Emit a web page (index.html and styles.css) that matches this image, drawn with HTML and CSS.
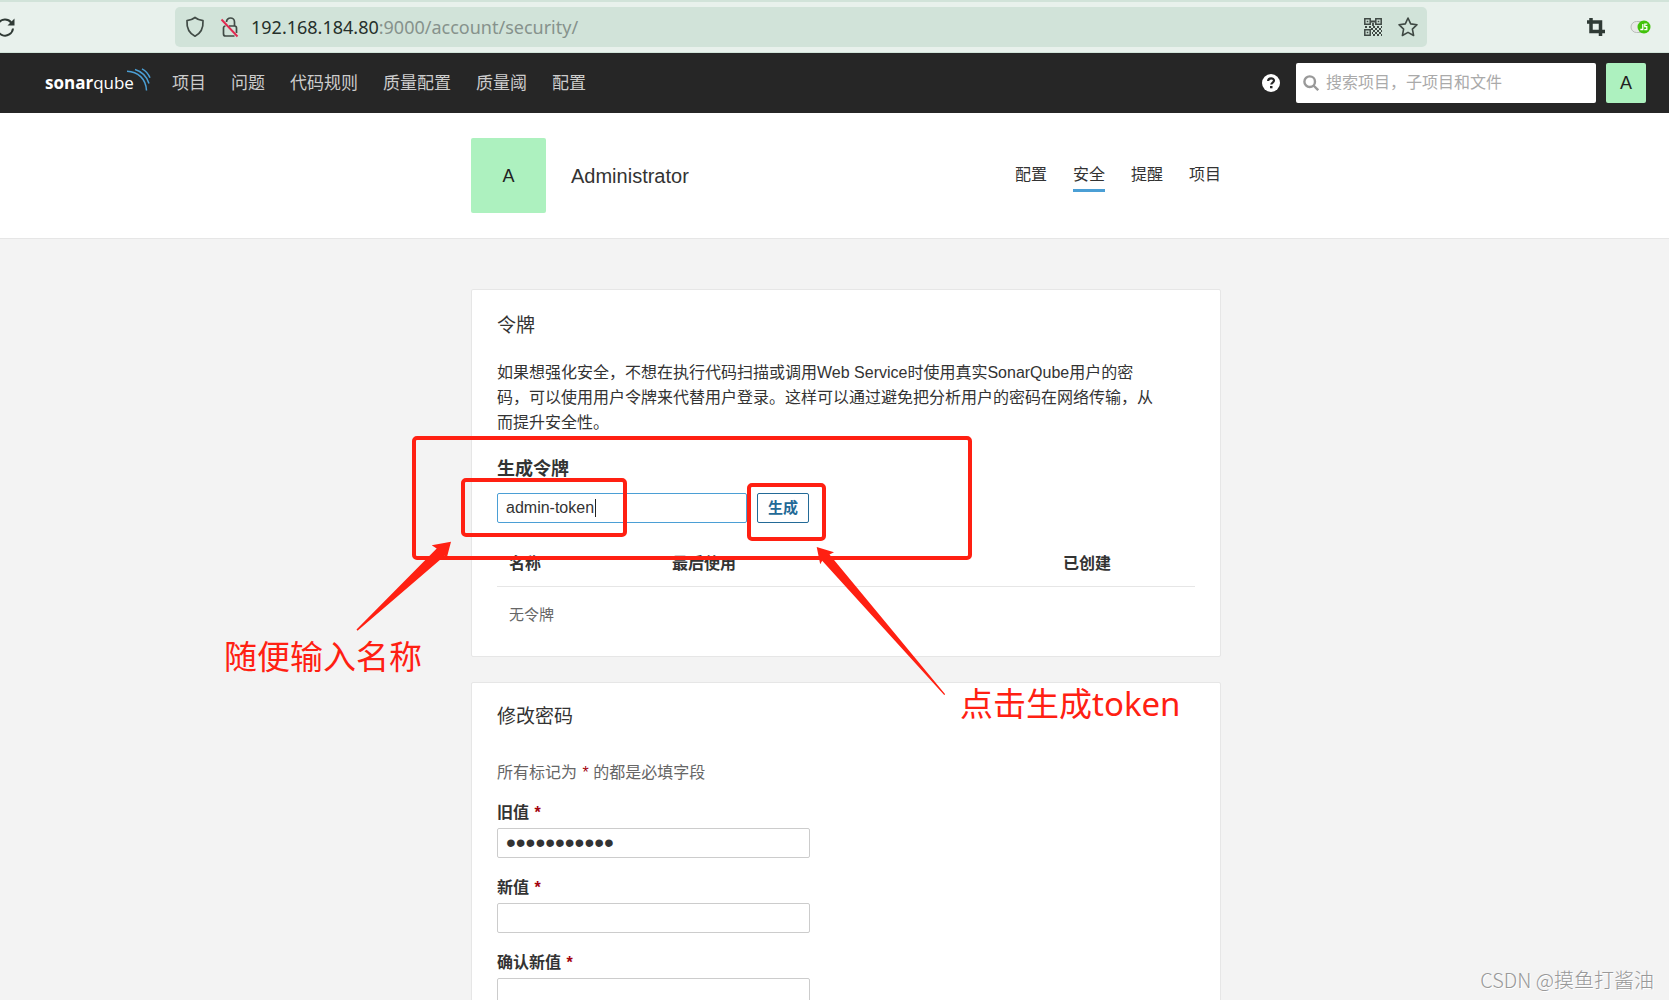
FILE: index.html
```html
<!DOCTYPE html>
<html lang="zh-CN">
<head>
<meta charset="utf-8">
<title>安全 - SonarQube</title>
<link rel="stylesheet" href="styles.css">
</head>
<body>
<div class="browser">
  <button class="icon-button reload" aria-label="刷新">
    <svg width="20" height="22" viewBox="0 0 20 22" fill="none" stroke="#2f3a35" stroke-width="2"><path d="M16.200 6.500A8 8 0 1 0 18 12.500"/><path d="M19.500 2.500v7h-7z" fill="#2f3a35" stroke="none"/></svg>
  </button>
  <div class="address">
    <svg width="20" height="22" viewBox="0 0 20 22" fill="none" stroke="#414b46" stroke-width="1.700" stroke-linejoin="round"><path d="M10 1.500c2.500 2 5 2.800 8 3.200.4 6.500-1.800 12.300-8 15.500C3.800 17 1.600 11.200 2 4.700c3-.4 5.500-1.200 8-3.200z"/></svg>
    <svg class="lock" width="20" height="22" viewBox="0 0 20 22" fill="none" stroke="#414b46" stroke-width="1.700"><path d="M6.500 6a4 4 0 0 1 8 0v4"/><path d="M9 10h5.500a2 2 0 0 1 2 2v5M14.500 20h-9a2 2 0 0 1-2-2v-6a2 2 0 0 1 2-2"/><path d="M1.500 3.500l16 17" stroke="#e22850" stroke-width="1.900"/></svg>
    <span class="url"><span class="host">192.168.184.80</span>:9000/account/security/</span>
    <svg width="20" height="20" viewBox="0 0 20 20" fill="none" stroke="#3f4944" stroke-width="1.500"><path d="M1.800 1.800h5.400v5.400H1.800zM12.800 1.800h5.400v5.400h-5.400zM1.800 12.800h5.400v5.400H1.800z"/><path d="M3.700 4.500h1.600M14.700 4.500h1.600M3.700 15.500h1.600" stroke-width="1.700"/><path d="M8 4.500h4M10 6v3M2 10h2m2 0h2m2 0h2m2 0h2m2 0h1M8 12h2m2 0h2m2 0h2M10 14h2m2 0h2m2 0h1M9 16h1m2 0h2m2 0h2M10 18h2m2 0h2m2 0h1" stroke-width="1.800"/></svg>
    <svg class="star" width="22" height="22" viewBox="0 0 22 22" fill="none" stroke="#3f4944" stroke-width="1.600" stroke-linejoin="round"><path d="M11 2l2.700 5.900 6.300.8-4.600 4.400 1.200 6.400L11 16.400l-5.600 3.100 1.200-6.400L2 8.700l6.300-.8z"/></svg>
  </div>
  <div class="extensions">
    <svg width="20" height="20" viewBox="0 0 20 20" fill="none" stroke="#2f3a35" stroke-width="3.500"><path d="M5 1v13.500h14M1 5h13.500v14"/></svg>
    <svg width="21" height="16" viewBox="0 0 21 16"><rect x="1" y="2.500" width="16" height="11" rx="5.500" fill="#e8e8e8" stroke="#b8bdb9"/><circle cx="14" cy="8" r="6.500" fill="#41c30a"/><path d="M12.800 5v5.500h-2.500M17.300 5.200h-2.500v2.500h2v3h-2.500" fill="none" stroke="#fff" stroke-width="1.300"/></svg>
  </div>
</div>
<header class="topbar">
  <a class="logo" href="#"><span><b>sonar</b>qube</span>
    <svg width="26" height="24" viewBox="0 0 26 24" fill="none" stroke="#4b9fd5" stroke-width="1.500"><path d="M1 3.200C12 3.500 20 11 20.500 22.500M9 1.500c7.500 2.300 12 7.500 14 14M16 .8c3.800 2 6.400 5 8 9"/></svg>
  </a>
  <nav class="main-nav">
    <a href="#">项目</a><a href="#">问题</a><a href="#">代码规则</a><a href="#">质量配置</a><a href="#">质量阈</a><a href="#">配置</a>
  </nav>
  <button class="icon-button help" aria-label="帮助">
    <svg width="18" height="18" viewBox="0 0 18 18"><circle cx="9" cy="9" r="9" fill="#fff"/><path d="M6.100 7c.1-3.600 5.900-3.500 5.900-.4 0 2-2.700 1.900-2.700 4" fill="none" stroke="#262626" stroke-width="2.200"/><path d="M8 12h2.500v2.300H8z" fill="#262626"/></svg>
  </button>
  <label class="search">
    <svg width="16" height="16" viewBox="0 0 16 16" fill="none" stroke="#999" stroke-width="2.400"><circle cx="6.700" cy="6.700" r="5.300"/><path d="M10.500 10.500l4.700 4.700"/></svg>
    <input type="search" aria-label="搜索" placeholder="搜索项目，子项目和文件">
  </label>
  <button class="avatar small">A</button>
</header>
<div class="page">
  <div class="account">
    <div class="container account-row">
      <div class="avatar large">A</div>
      <h1>Administrator</h1>
      <nav class="tabs"><a href="#">配置</a><a class="active" href="#">安全</a><a href="#">提醒</a><a href="#">项目</a></nav>
    </div>
  </div>
  <main class="cards">
    <section class="card tokens">
      <h2>令牌</h2>
      <p class="intro">如果想强化安全，不想在执行代码扫描或调用Web Service时使用真实SonarQube用户的密码，可以使用用户令牌来代替用户登录。这样可以通过避免把分析用户的密码在网络传输，从而提升安全性。</p>
      <label class="generate-label" for="token-name">生成令牌</label>
      <form class="generate">
        <div class="token-field"><input id="token-name" type="text" value="admin-token"><span class="caret"></span></div>
        <button type="button">生成</button>
      </form>
      <table>
        <thead><tr><th class="name">名称</th><th>最后使用</th><th class="created">已创建</th><th class="actions"></th></tr></thead>
        <tbody><tr><td colspan="4">无令牌</td></tr></tbody>
      </table>
    </section>
    <section class="card password">
      <h2>修改密码</h2>
      <p class="note">所有标记为 <em>*</em> 的都是必填字段</p>
      <form>
        <div class="field"><label for="old">旧值 <em>*</em></label><input id="old" type="password" value="12345678901"></div>
        <div class="field"><label for="new">新值 <em>*</em></label><input id="new" type="password"></div>
        <div class="field"><label for="confirm">确认新值 <em>*</em></label><input id="confirm" type="password"></div>
      </form>
    </section>
  </main>
</div>
<svg class="annotations" width="1669" height="1000" viewBox="0 0 1669 1000">
  <g fill="none" stroke="#ff2012" stroke-width="4">
    <rect x="414" y="438" width="556" height="120" rx="3"/>
    <rect x="463" y="480" width="162" height="55" rx="3"/>
    <rect x="749" y="485" width="75" height="54" rx="3"/>
  </g>
  <g fill="#ff2012">
    <path d="M451 541.700l-19.300 3.600 5 3.200L356.500 629.500l1 1.200 87.300-75 2 2z"/>
    <path d="M816.700 547l17.300 5.300-4.500 2.200L945.200 694.300l-1 .8-122-134.400-2 3.600z"/>
  </g>
  <g class="annotation-text">
    <text x="224" y="669">随便输入名称</text>
    <text x="960" y="716">点击生成token</text>
  </g>
</svg>
<div class="watermark">CSDN @摸鱼打酱油</div>
</body>
</html>
```
FILE: styles.css
```css
* { box-sizing: border-box; }

body {
  margin: 0;
  height: 100vh;
  display: flex;
  flex-direction: column;
  overflow: hidden;
  position: relative;
  background: #f3f3f3;
  color: #333;
  font: 16px/24px "Liberation Sans", "Noto Sans CJK SC", sans-serif;
}

h1, h2, p { margin: 0; font-weight: 400; }
a { color: inherit; text-decoration: none; }
input, button { font: inherit; color: inherit; }
svg { display: block; flex: none; }
em { margin-left: 1px; color: #a4030f; font-style: normal; }

.icon-button {
  border: 0;
  padding: 0;
  background: none;
  flex: none;
}

/* Browser toolbar */
.browser {
  flex: none;
  height: 53px;
  display: flex;
  align-items: center;
  background: #e8f1ec;
  border-top: 2px solid #d1e3d9;
  border-bottom: 1px solid #d1e3d9;
}
.reload { margin-left: -5px; width: 20px; }
.address {
  flex: 1;
  height: 40px;
  margin-left: 160px;
  padding: 0 8px 0 10px;
  display: flex;
  align-items: center;
  background: #d1e3d9;
  border-radius: 5px;
}
.lock { margin-left: 15px; }
.url {
  flex: 1;
  margin-left: 11px;
  font-family: "Noto Sans", sans-serif;
  font-size: 18px;
  color: #86928c;
}
.host { color: #26302b; }
.star { margin-left: 14px; }
.extensions {
  display: flex;
  align-items: center;
  gap: 24px;
  padding: 0 18px 0 159px;
}

/* Application header */
.topbar {
  flex: none;
  height: 60px;
  display: flex;
  align-items: center;
  padding: 0 23px 0 45px;
  background: #262626;
  color: #ccc;
}
.logo {
  position: relative;
  width: 127px;
  color: #fff;
  font: 400 17px/24px "Open Sans", sans-serif;
}
.logo b { font-weight: 700; }
.logo svg { position: absolute; left: 81px; top: -3px; }
.main-nav {
  flex: 1;
  display: flex;
  gap: 25px;
  padding-top: 2px;
  font-size: 17px;
}
.search {
  width: 300px;
  height: 40px;
  margin: 0 10px 0 16px;
  padding: 0 7px;
  display: flex;
  align-items: center;
  gap: 7px;
  background: #fff;
  border-radius: 2px;
}
.search input {
  flex: 1;
  min-width: 0;
  padding: 0;
  border: 0;
  outline: 0;
  background: none;
}
.search input::placeholder { color: #aaa; }
.avatar {
  flex: none;
  display: grid;
  place-items: center;
  padding: 0;
  border: 0;
  border-radius: 2px;
  background: #adf1bf;
  color: #222;
  font-size: 18px;
}
.small { width: 40px; height: 40px; }
.large { width: 75px; height: 75px; }

/* Account heading */
.page {
  flex: 1;
  min-height: 0;
  overflow: hidden;
}
.account {
  padding: 25px 0 25px 23px;
  background: #fff;
  border-bottom: 1px solid #e6e6e6;
}
.container { max-width: 750px; margin: 0 auto; }
.account-row { display: flex; align-items: center; }
.account h1 { margin-left: 25px; font-size: 20px; }
.tabs { display: flex; gap: 26px; margin-left: auto; }
.tabs a { padding: 4px 0 2px; border-bottom: 3px solid transparent; }
.tabs .active { border-color: #4b9fd5; }

/* Cards */
.cards {
  max-width: 773px;
  margin: 0 auto;
  padding: 50px 0 50px 23px;
  display: flex;
  flex-direction: column;
  gap: 25px;
}
.card {
  background: #fff;
  border: 1px solid #e6e6e6;
  border-radius: 2px;
}
.card h2 { font-size: 19px; }
.tokens { padding: 24px 25px 12px; }
.password { padding: 22px 25px 24px; }
.intro {
  max-width: 660px;
  margin: 22px 0;
  line-height: 25px;
}
.generate-label {
  display: block;
  font-size: 18px;
  font-weight: 700;
}
.generate {
  display: flex;
  gap: 10px;
  margin: 12px 0 20px;
}
.token-field { position: relative; }
.token-field input, .field input {
  display: block;
  height: 30px;
  padding: 0 8px;
  border: 1px solid #ccc;
  border-radius: 2px;
  outline: 0;
  background: #fff;
}
.token-field input { width: 250px; border-color: #4b9fd5; }
.caret {
  position: absolute;
  left: 98px;
  top: 6px;
  width: 1px;
  height: 18px;
  background: #222;
}
.generate button {
  width: 52px;
  height: 30px;
  padding: 0;
  border: 1px solid #236a97;
  border-radius: 2px;
  background: #fff;
  color: #236a97;
  font-size: 15px;
  font-weight: 700;
}
table {
  width: 100%;
  table-layout: fixed;
  border-collapse: collapse;
}
th {
  height: 43px;
  padding: 0 12px;
  border-bottom: 1px solid #e6e6e6;
  text-align: left;
}
.name { width: 163px; }
.created { width: 200px; text-align: right; }
.actions { width: 72px; }
td {
  height: 58px;
  padding: 0 12px;
  font-size: 15px;
  color: #666;
}
.note { margin: 32px 0 16px; color: #666; }
.field { margin-bottom: 18px; }
.field label { display: block; margin-bottom: 3px; font-weight: 700; }
.field input { width: 313px; }
.field input[type="password"] { font-size: 28px; }

/* Notes drawn over the page */
.annotations {
  position: absolute;
  left: 0;
  top: 0;
  pointer-events: none;
}
.annotation-text {
  fill: #ff2012;
  font: 33px "Noto Sans", "Noto Sans CJK SC", sans-serif;
}
.watermark {
  position: absolute;
  right: 15px;
  bottom: 8px;
  color: #999;
  font: 300 20px/24px "Noto Sans CJK SC", sans-serif;
  text-shadow: 1px 1px 0 #fff;
}
```
